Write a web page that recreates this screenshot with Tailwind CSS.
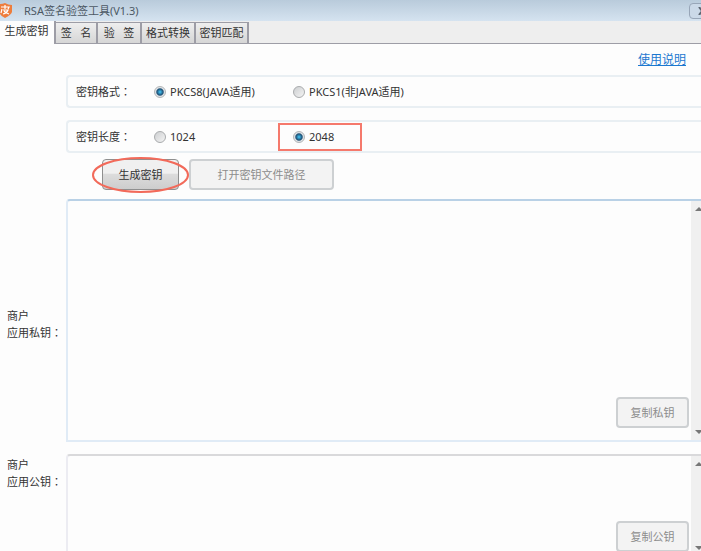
<!DOCTYPE html>
<html lang="zh-CN">
<head>
    <meta charset="UTF-8">
    <meta name="viewport" content="width=device-width, initial-scale=1.0">
    <title>RSA签名验签工具(V1.3)</title>
    <script src="https://cdn.jsdelivr.net/npm/@tailwindcss/browser@4"></script>
</head>
<body class="h-screen flex flex-col overflow-hidden bg-[#fdfdfd] font-['Noto_Sans','Noto_Sans_CJK_SC',sans-serif] text-[11px] leading-4 text-[#333]">
    <!-- Title bar -->
    <header class="h-[21px] shrink-0 flex items-center justify-between overflow-hidden bg-linear-to-b from-[#b9cbdb] to-[#d5e3f0]">
        <div class="flex items-center gap-3">
            <svg class="w-3 h-4 shrink-0" viewBox="0 0 12 16">
                <path fill="#ee7d3c" d="M0 1Q3 1 5 0Q8 2 12 2V9Q11 12 5 15Q1 13 0 11z"/>
                <path fill="none" stroke="#fff" stroke-width="1.2" d="M1 4H9L8 6M5 2V6M2 6L1 10M3 7H8Q7 10 3 11M4 8Q6 10 9 11"/>
            </svg>
            <h1 class="text-[#4c5864]">RSA签名验签工具(V1.3)</h1>
        </div>
        <button class="w-8 h-4 -mr-5 pl-2 rounded-sm border border-[#98a6b8] bg-[#cbd9e8]" aria-label="关闭">
            <svg class="w-2 h-2" viewBox="0 0 8 8" fill="none" stroke="#5d6672" stroke-width="2">
                <path d="M1 0L7 8M7 0L1 8"/>
            </svg>
        </button>
    </header>

    <!-- Tabs -->
    <nav class="h-[23px] shrink-0 flex items-end bg-[#eee] border-b border-[#9d9da6] whitespace-pre">
        <button class="w-[56px] h-[23px] -mb-px pr-px pb-1 bg-[#fdfdfd] border-r-2 border-[#9d9da6]">生成密钥</button>
        <button class="w-[42px] h-[21px] bg-linear-to-b from-[#eee] to-[#d6d6d6] border-t border-r-2 border-[#9d9da6]">签   名</button>
        <button class="w-[44px] h-[21px] bg-linear-to-b from-[#eee] to-[#d6d6d6] border-t border-r-2 border-[#9d9da6]">验   签</button>
        <button class="w-[54px] h-[21px] bg-linear-to-b from-[#eee] to-[#d6d6d6] border-t border-r-2 border-[#9d9da6]">格式转换</button>
        <button class="w-[53px] h-[21px] bg-linear-to-b from-[#eee] to-[#d6d6d6] border-t border-r-2 border-[#9d9da6]">密钥匹配</button>
    </nav>

    <main class="flex-1 flex flex-col pl-[66px]">
        <div class="h-[31px] shrink-0 flex items-center justify-end pr-[15px]">
            <a href="#" class="text-[12px] text-[#1b78d0] underline">使用说明</a>
        </div>

        <!-- Options -->
        <div class="h-[33px] shrink-0 flex items-center pl-2 rounded-l-sm border-2 border-r-0 border-[#e9eff3]" role="radiogroup" aria-labelledby="formatLabel">
            <span id="formatLabel" class="w-[78px]">密钥格式<span class="font-['Noto_Sans_CJK_TC',sans-serif]" lang="zh-TW">：</span></span>
            <label class="w-[139px] flex items-center gap-1">
                <input type="radio" name="format" checked class="appearance-none w-3 h-3 rounded-full border border-[#b4b7b9] bg-[#e3e6e8] checked:bg-radial checked:from-[#3bb0e0] checked:from-10% checked:via-[#1d4f73] checked:via-45% checked:to-[#dfe3e6] checked:to-60%">
                PKCS8(JAVA适用)
            </label>
            <label class="flex items-center gap-1">
                <input type="radio" name="format" class="appearance-none w-3 h-3 rounded-full border border-[#a9abad] bg-linear-to-br from-[#cdcfd1] to-[#f4f4f4]">
                PKCS1(非JAVA适用)
            </label>
        </div>
        <div class="h-[33px] shrink-0 mt-3 flex items-center pl-2 rounded-l-sm border-2 border-r-0 border-[#e9eff3]" role="radiogroup" aria-labelledby="lengthLabel">
            <span id="lengthLabel" class="w-[78px]">密钥长度<span class="font-['Noto_Sans_CJK_TC',sans-serif]" lang="zh-TW">：</span></span>
            <label class="w-[124px] flex items-center gap-1">
                <input type="radio" name="length" class="appearance-none w-3 h-3 rounded-full border border-[#a9abad] bg-linear-to-br from-[#cdcfd1] to-[#f4f4f4]">
                1024
            </label>
            <label class="w-[84px] h-7 flex items-center gap-1 pl-[13px] border-2 border-[#f5796c]">
                <input type="radio" name="length" checked class="appearance-none w-3 h-3 rounded-full border border-[#b4b7b9] bg-[#e3e6e8] checked:bg-radial checked:from-[#3bb0e0] checked:from-10% checked:via-[#1d4f73] checked:via-45% checked:to-[#dfe3e6] checked:to-60%">
                2048
            </label>
        </div>

        <!-- Actions -->
        <div class="shrink-0 flex gap-[10px] mt-[6px] pl-9">
            <div class="relative">
                <button class="w-[77px] h-[31px] rounded-sm border border-[#8f8f8f] bg-linear-to-b from-[#f0f0f0] from-45% via-[#dcdcdc] via-50% to-[#cdcdcd]">生成密钥</button>
                <svg class="absolute -left-[10px] -top-[2px] w-[97px] h-[36px] pointer-events-none" viewBox="0 0 97 36" fill="none" stroke="#f26a5a" stroke-width="2">
                    <ellipse cx="48.5" cy="18" rx="47.5" ry="17"/>
                </svg>
            </div>
            <button disabled class="w-[145px] h-[31px] rounded-sm border-2 border-[#cdd0d2] bg-[#f3f3f3] text-[#8c8c8c]">打开密钥文件路径</button>
        </div>

        <!-- Private key -->
        <div class="relative shrink-0 flex h-[243px] mt-[9px] -mr-2 border-2 border-[#e0ebf6] border-t-[#b9d1e6] rounded-tl-sm">
            <label for="privateKey" class="absolute right-full mr-[5px] w-14 top-[107px]">商户<br>应用私钥<span class="font-['Noto_Sans_CJK_TC',sans-serif]" lang="zh-TW">：</span></label>
            <textarea id="privateKey" class="flex-1 resize-none outline-none p-1"></textarea>
            <div class="w-4 flex flex-col items-center justify-between py-[6px] bg-[#f0f0f0]">
                <svg class="w-2 h-1" viewBox="0 0 8 4" fill="#777"><path d="M0 4L4 0L8 4z"/></svg>
                <svg class="w-2 h-1" viewBox="0 0 8 4" fill="#777"><path d="M0 0L4 4L8 0z"/></svg>
            </div>
            <button disabled class="absolute right-[18px] bottom-3 w-[73px] h-[31px] rounded-sm border-2 border-[#cdd0d2] bg-[#f3f3f3] text-[#8c8c8c]">复制私钥</button>
        </div>

        <!-- Public key -->
        <div class="relative flex-1 flex min-h-[98px] mt-3 -mr-2 border-2 border-b-0 border-[#ececf2] border-t-[#d9d9db] rounded-tl-sm">
            <label for="publicKey" class="absolute right-full mr-[5px] w-14 top-[1px]">商户<br>应用公钥<span class="font-['Noto_Sans_CJK_TC',sans-serif]" lang="zh-TW">：</span></label>
            <textarea id="publicKey" class="flex-1 resize-none outline-none p-1"></textarea>
            <div class="w-4 flex flex-col items-center justify-between pt-[6px] pb-[2px] bg-[#f0f0f0]">
                <svg class="w-2 h-1" viewBox="0 0 8 4" fill="#777"><path d="M0 4L4 0L8 4z"/></svg>
                <svg class="w-2 h-1" viewBox="0 0 8 4" fill="#777"><path d="M0 0L4 4L8 0z"/></svg>
            </div>
            <button disabled class="absolute right-[18px] bottom-0 w-[73px] h-[31px] rounded-sm border-2 border-[#cdd0d2] bg-[#f3f3f3] text-[#8c8c8c]">复制公钥</button>
        </div>
    </main>
</body>
</html>
